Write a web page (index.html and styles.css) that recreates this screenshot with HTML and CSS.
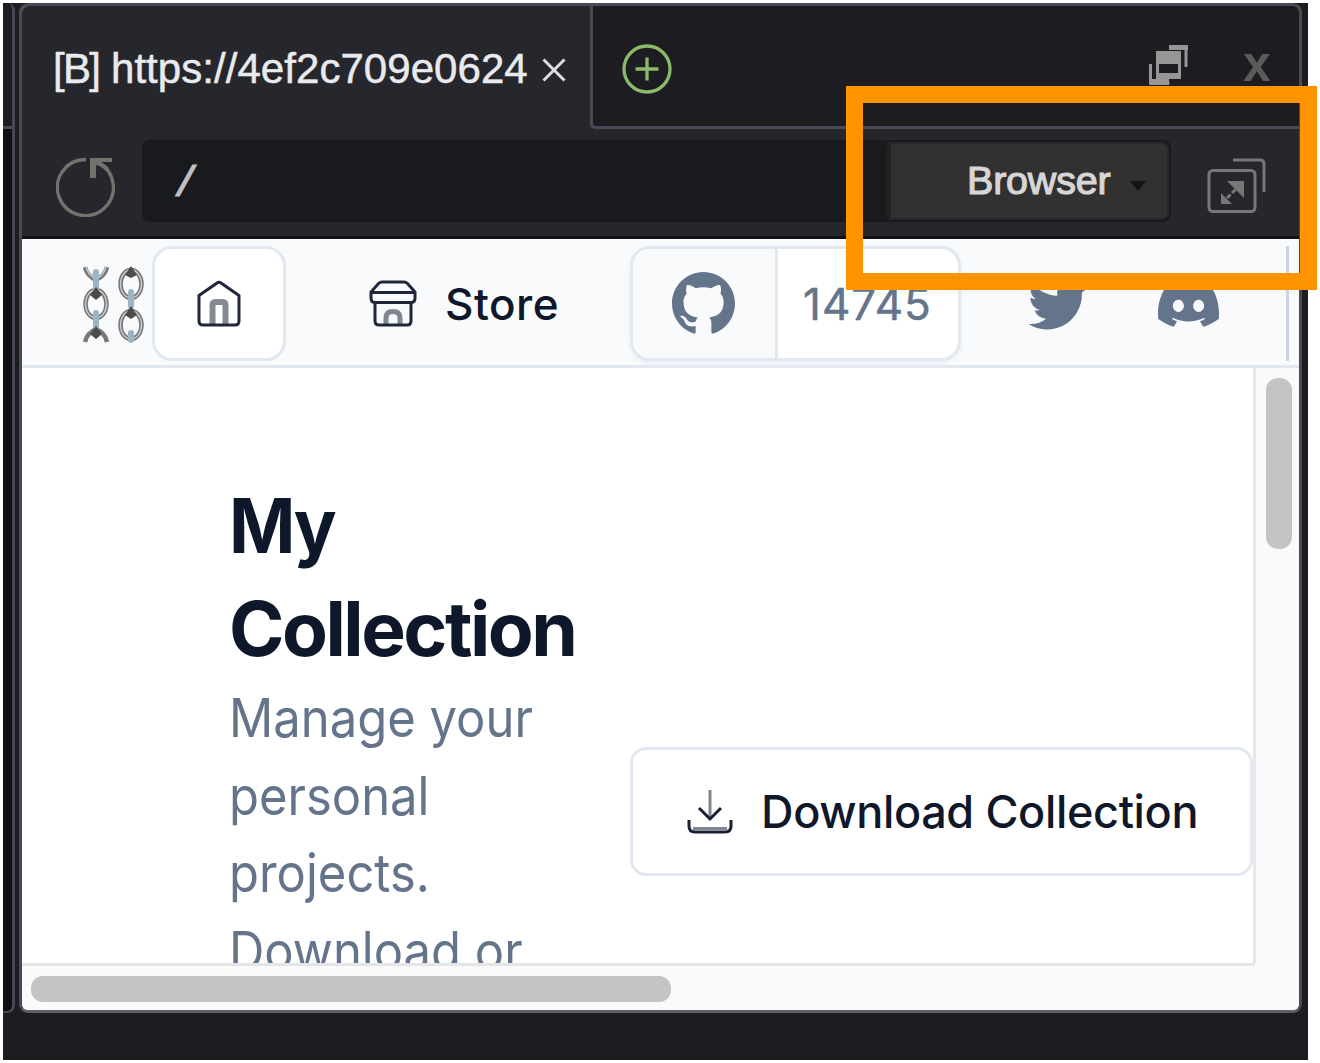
FILE: index.html
```html
<!DOCTYPE html>
<html lang="en">
<head>
<meta charset="utf-8">
<title>My Collection</title>
<link rel="stylesheet" href="styles.css">
</head>
<body>
<div class="desktop">
  <aside class="neighbour"><div class="neighbour-tabs"></div></aside>
  <main class="window">
    <div class="tabs">
      <div class="tab">
        <span class="tab-title"><span class="tab-kind">[B]</span> https://4ef2c709e0624</span>
        <svg class="tab-close" viewBox="0 0 24 24"><path d="M1.5 1.5l21 21M22.500 1.500l-21 21"/></svg>
      </div>
      <div class="tab-rest">
        <svg class="add" viewBox="0 0 50 50"><circle cx="25" cy="25" r="23"/><path d="M25 13.500v23M13.500 25h23"/></svg>
        <svg class="restore" viewBox="0 0 40 42"><path class="thin" d="M1.500 20v19h19M20 2.500h17V23"/><path class="fill" d="M20 1h19v5H20zM1 35h19v6H1z"/><path class="front" d="M8.500 9h22v24h-22z"/><path class="fill" d="M7 7h25v13H7zM7 29h25v6H7z"/></svg>
        <span class="window-close">x</span>
      </div>
    </div>
    <div class="toolbar">
      <svg class="reload" viewBox="0 0 60 60"><path d="M30 2.500A28 28 0 1 0 42 5.500"/><path class="fill" d="M34 1h22v4H45q5 3 8 6l-3 3q-5-5-10-6v13h-6z"/></svg>
      <div class="address">
        <span class="path">/</span>
        <div class="mode"><span class="mode-name">Browser</span><span class="caret"></span></div>
      </div>
      <svg class="popout" viewBox="0 0 60 56"><rect x="2" y="12.500" width="46" height="41" rx="4"/><path d="M26 2h27q4 0 4 4v28"/><path d="M20 40l12-12" stroke-dasharray="5 2"/><path class="fill" d="M20 23h17v17zM14 35v11h11z"/></svg>
    </div>
    <header class="site-nav">
      <svg class="chain" viewBox="0 0 61 78">
        <g class="ring"><path d="M2 2q2 9 11 13q9-4 11-13"/><ellipse cx="13" cy="39" rx="10.500" ry="14"/><path d="M2 77q2-9 11-13q9 4 11 13"/><ellipse cx="48" cy="19" rx="10.500" ry="14"/><ellipse cx="48" cy="60" rx="10.500" ry="14"/></g>
        <g class="shine"><path d="M3 2q3 9 10 12q7-3 10-12"/><ellipse cx="13" cy="39" rx="10.500" ry="14"/><ellipse cx="48" cy="19" rx="10.500" ry="14"/><ellipse cx="48" cy="60" rx="10.500" ry="14"/></g>
        <g class="joint"><path d="M13 7v16M13 48v14M48 27v14M48 68v7"/></g>
        <g class="knot"><path d="M13 22l6 8-6 5-6-5zM13 61l6 8-6 5-6-5zM48 1l6 9-6 3-6-3zM48 41l6 9-6 4-6-4z"/></g>
      </svg>
      <a class="home"><svg viewBox="0 0 44 47"><path d="M2 15.500L20 3q2-1.500 4 0l18 12.500V41q0 4-4 4H6q-4 0-4-4z"/><path class="soft" d="M15.500 44V25q0-3 3-3h7q3 0 3 3v19" stroke-width="6"/></svg></a>
      <a class="store"><svg viewBox="0 0 48 47"><path d="M13 2h22q2 0 3.500 1.500L46 12v6q0 4-3 4.500H5Q2 22 2 18v-6l7.500-8.500Q11 2 13 2zM2 12.500h44M6 23v18q0 4 4 4h28q4 0 4-4V23"/><path class="soft" d="M17 44v-6q0-6.500 7-6.500t7 6.500v6" stroke-width="5"/></svg><span>Store</span></a>
      <a class="github">
        <span class="github-logo"><svg viewBox="0 0 16 16"><path d="M8 0C3.580 0 0 3.580 0 8c0 3.540 2.290 6.530 5.470 7.590.4.070.55-.17.55-.38 0-.19-.01-.82-.01-1.490-2.010.37-2.530-.49-2.690-.94-.09-.23-.48-.94-.82-1.130-.28-.15-.68-.52-.01-.53.63-.01 1.080.58 1.230.82.72 1.210 1.870.87 2.330.66.07-.52.28-.87.51-1.070-1.780-.2-3.640-.89-3.640-3.950 0-.87.31-1.590.82-2.150-.08-.2-.36-1.020.08-2.120 0 0 .67-.21 2.200.82.64-.18 1.320-.27 2-.27s1.360.09 2 .27c1.530-1.040 2.200-.82 2.200-.82.44 1.100.16 1.920.08 2.120.51.56.82 1.270.82 2.150 0 3.070-1.870 3.750-3.650 3.950.29.25.54.73.54 1.480 0 1.070-.01 1.930-.01 2.200 0 .21.15.46.55.38A8.010 8.010 0 0 0 16 8c0-4.420-3.580-8-8-8z"/></svg></span>
        <span class="stars">14745</span>
      </a>
      <svg class="twitter" viewBox="0 0 24 24"><path d="M23.953 4.570a10 10 0 01-2.825.775 4.958 4.958 0 002.163-2.723c-.951.555-2.005.959-3.127 1.184a4.920 4.920 0 00-8.384 4.482C7.690 8.095 4.067 6.130 1.640 3.162a4.822 4.822 0 00-.666 2.475c0 1.710.87 3.213 2.188 4.096a4.904 4.904 0 01-2.228-.616v.06a4.923 4.923 0 003.946 4.827 4.996 4.996 0 01-2.212.085 4.936 4.936 0 004.604 3.417 9.867 9.867 0 01-6.102 2.105c-.39 0-.779-.023-1.170-.067a13.995 13.995 0 007.557 2.209c9.053 0 13.998-7.496 13.998-13.985 0-.21 0-.42-.015-.63A9.935 9.935 0 0024 4.590z"/></svg>
      <svg class="discord" viewBox="0 0 24 24"><path d="M20.317 4.370a19.791 19.791 0 00-4.885-1.515.074.074 0 00-.079.037c-.211.375-.445.865-.608 1.249-1.845-.276-3.680-.276-5.487 0-.164-.393-.406-.874-.618-1.249a.077.077 0 00-.079-.037 19.736 19.736 0 00-4.885 1.515.070.070 0 00-.032.028C.533 9.046-.319 13.580.099 18.058a.082.082 0 00.031.056c2.053 1.508 4.041 2.423 5.993 3.029a.078.078 0 00.084-.028c.462-.630.873-1.295 1.226-1.994a.076.076 0 00-.042-.106c-.653-.248-1.274-.550-1.872-.892a.077.077 0 01-.008-.128c.126-.094.252-.192.372-.291a.074.074 0 01.078-.011c3.928 1.793 8.180 1.793 12.061 0a.074.074 0 01.079.010c.120.099.246.198.373.292a.077.077 0 01-.007.128 12.299 12.299 0 01-1.873.891.077.077 0 00-.041.107c.360.698.772 1.363 1.225 1.993a.076.076 0 00.084.029c1.961-.607 3.950-1.522 6.002-3.029a.077.077 0 00.031-.055c.500-5.177-.838-9.674-3.549-13.660a.061.061 0 00-.031-.029zM8.020 15.331c-1.183 0-2.157-1.086-2.157-2.419 0-1.333.956-2.419 2.157-2.419 1.211 0 2.176 1.095 2.157 2.419 0 1.333-.956 2.419-2.157 2.419zm7.975 0c-1.183 0-2.157-1.086-2.157-2.419 0-1.333.955-2.419 2.157-2.419 1.211 0 2.176 1.095 2.157 2.419 0 1.333-.946 2.419-2.157 2.419z"/></svg>
      <span class="nav-divider"></span>
    </header>
    <div class="viewport">
      <section class="page">
        <div class="intro">
          <h1><span class="first">My</span><br>Collection</h1>
          <p>Manage your<br>personal<br>projects.<br>Download or</p>
        </div>
        <button class="download"><svg viewBox="0 0 46 46"><path d="M2 31v6q0 6 6 6h30q6 0 6-6v-6M12 19l11 11 11-11" class="mid"/><path class="soft" d="M23 1v28M6 39.500h34"/></svg><span>Download Collection</span></button>
      </section>
      <div class="scroll-y"><div class="thumb-y"></div></div>
    </div>
    <div class="scroll-x"><div class="thumb-x"></div></div>
  </main>
</div>
<div class="highlight"></div>
</body>
</html>
```
FILE: styles.css
```css
* { box-sizing: border-box; }
body { margin: 0; padding: 3px 0 0 3px; width: 1320px; height: 1063px; overflow: hidden; background: #fff; font-family: Inter, "Liberation Sans", sans-serif; }
svg { display: block; flex: none; fill: none; }
.desktop { display: flex; gap: 4px; width: 1305px; height: 1057px; background: #1d1c21; }
.neighbour { width: 12px; height: 1010px; background: #0e0f0e; border-right: 3px solid #454853; border-bottom: 2px solid #454853; border-radius: 0 8px 8px 0; overflow: hidden; }
.neighbour-tabs { height: 126px; background: #1d1c21; border-bottom: 3px solid #484b57; }
.window { width: 1283px; height: 1010px; border: 3px solid #484b57; border-bottom-color: #5c6069; border-radius: 9px; overflow: hidden; background: #fff; display: flex; flex-direction: column; }

.tabs { display: flex; height: 123px; background: #26272c; flex: none; }
.tab { display: flex; width: 568px; padding-left: 31px; font: 42px/126px "Liberation Sans", Arial, sans-serif; color: #e9eaee; }
.tab-title { width: 489px; white-space: nowrap; letter-spacing: .05px; -webkit-text-stroke: .5px #e9eaee; }
.tab-kind { letter-spacing: -1.700px; }
.tab-close { width: 24px; height: 24px; margin-top: 52px; stroke: #dddee0; stroke-width: 3; }
.tab-rest { flex: 1; display: flex; background: #1d1c21; border-left: 3px solid #484b57; border-bottom: 3px solid #484b57; border-radius: 0 0 0 5px; }
.add { width: 50px; height: 50px; margin: 38px 0 0 29px; stroke: #8aba6b; stroke-width: 3.300; }
.restore { width: 40px; height: 42px; margin: 38px 0 0 477px; stroke: #969696; stroke-width: 3; }
.restore .fill { fill: #969696; stroke: none; }
.restore .front { fill: #1d1c21; }
.window-close { margin-left: 54px; font: bold 50px/117px "Liberation Sans", Arial, sans-serif; color: #5b5b5c; }

.toolbar { display: flex; flex: none; height: 110px; padding-left: 34px; background: #26272c; border-bottom: 3px solid #111217; }
.reload { width: 60px; height: 60px; margin-top: 28px; stroke: #73726f; stroke-width: 3.300; }
.reload .fill { fill: #73726f; stroke: none; }
.address { display: flex; width: 1029px; height: 82px; margin: 11px 0 0 26px; background: #191a1d; border-radius: 8px; }
.path { width: 744px; padding-left: 31px; font: 43px/89px "Liberation Mono", monospace; color: #bfc0c2; -webkit-text-stroke: 1px #bfc0c2; }
.mode { display: flex; width: 283px; height: 78px; margin-top: 2px; background: #303130; border: 2px solid #27282b; border-left: 5px solid #202123; border-radius: 4px 8px 8px 4px; }
.mode-name { width: 165px; margin-left: 76px; font: 39.500px/72px "Liberation Sans", Arial, sans-serif; color: #d6d6d6; -webkit-text-stroke: 1.200px #d6d6d6; letter-spacing: -.2px; }
.caret { margin-top: 37px; margin-left: -2px; width: 16px; height: 10px; background: #131413; clip-path: polygon(0 0, 100% 0, 50% 100%); }
.popout { width: 60px; height: 56px; margin: 29px 0 0 36px; stroke: #777; stroke-width: 3; }
.popout .fill { fill: #777; stroke: none; }

.site-nav { display: flex; flex: none; height: 129px; padding-left: 61px; background: #f8fafc; border-bottom: 3px solid #e2e8f0; color: #0f172a; }
.chain { width: 61px; height: 78px; margin-top: 26px; }
.ring { stroke: #77787a; stroke-width: 4.500; }
.shine { stroke: #c9ced2; stroke-width: 1.400; }
.joint { stroke: #9db4c4; stroke-width: 6; stroke-linecap: round; }
.knot { fill: #4f4b49; }
.home { width: 134px; height: 115px; margin: 7px 0 0 8px; padding: 31px 0 0 42px; background: #fff; border: 3px solid #e2e8f0; border-radius: 20px; }
.home svg { width: 44px; height: 47px; stroke: #1f283b; stroke-width: 3; }
.soft { opacity: .55; }
.store { display: flex; width: 261px; margin-left: 83px; font-size: 44px; line-height: 130px; font-weight: 500; letter-spacing: .5px; }
.store svg { width: 48px; height: 47px; margin: 41px 28px 0 0; stroke: #1f283b; stroke-width: 3; }
.github { display: flex; width: 331px; height: 115px; margin-top: 7px; background: #fff; border: 3px solid #e2e8f0; border-radius: 20px; overflow: hidden; box-shadow: 0 2px 5px #e9eef4; }
.github-logo { width: 145px; padding: 23px 0 0 39px; background: #f8fafc; border-right: 3px solid #e2e8f0; }
.github-logo svg { width: 63px; height: 63px; fill: #64748b; }
.stars { padding-left: 25px; font-size: 44px; line-height: 110px; letter-spacing: 1px; color: #64748b; -webkit-text-stroke: .5px #64748b; }
.twitter { width: 60px; height: 60px; margin: 36px 0 0 67px; fill: #64748b; }
.discord { width: 61px; height: 61px; margin: 34px 0 0 70px; fill: #64748b; }
.nav-divider { width: 3px; height: 115px; margin: 7px 0 0 67px; background: #cbd5e1; }

.viewport { display: flex; height: 595px; flex: none; }
.page { display: flex; width: 1231px; padding-left: 207px; overflow: hidden; }
.intro { width: 401px; padding-top: 106px; white-space: nowrap; }
h1 { margin: 0; font-size: 75px; line-height: 103px; font-weight: 700; letter-spacing: -2.500px; color: #0f172a; }
.first { display: inline-block; transform: scaleX(.95); transform-origin: left; }
p { margin: 0; font-size: 53px; line-height: 77.500px; color: #64748b; transform: scaleX(.924); transform-origin: left; }
.download { display: flex; flex: none; width: 623px; height: 129px; margin-top: 379px; padding: 0 0 0 54px; background: #fff; border: 3px solid #e2e8f0; border-radius: 16px; font: 500 45px/123px Inter, sans-serif; letter-spacing: -.35px; color: #0f172a; white-space: nowrap; }
.download svg { width: 46px; height: 46px; margin: 39px 28px 0 0; stroke: #172034; stroke-width: 3; }
.scroll-y { width: 46px; padding: 10px 0 0 10px; background: #fafafa; border-left: 3px solid #e7e7e7; }
.thumb-y { width: 26px; height: 171px; background: #c4c4c4; border-radius: 12px; }
.scroll-x { flex: 1; padding: 13px 0 0 9px; background: linear-gradient(#e5e5e5, #e5e5e5) 0 0 / 1233px 3px no-repeat #fafafa; }
.thumb-x { width: 640px; height: 26px; background: #c4c4c4; border-radius: 12px; }
.highlight { position: absolute; left: 846px; top: 86px; width: 471px; height: 204px; border: 17px solid #ff9300; }
```
